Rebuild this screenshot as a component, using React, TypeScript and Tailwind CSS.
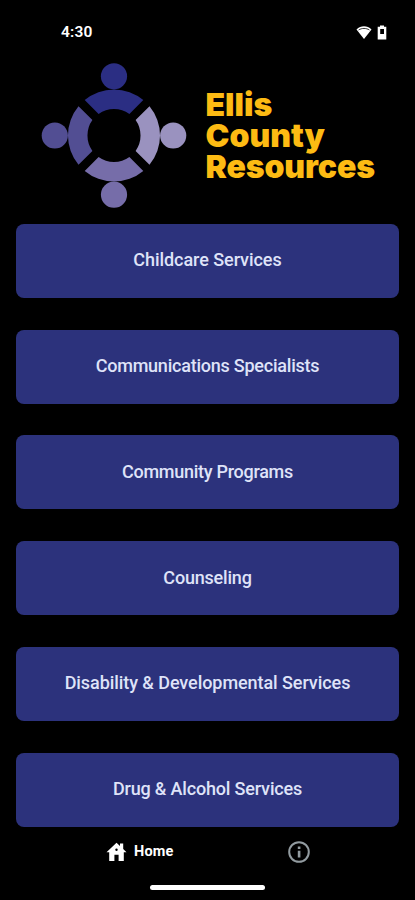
import React from "react";

const CATEGORIES = [
	{ label: "Childcare Services", tracking: "tracking-[-0.06px]" },
	{ label: "Communications Specialists", tracking: "tracking-[-0.23px]" },
	{ label: "Community Programs", tracking: "tracking-[-0.28px]" },
	{ label: "Counseling", tracking: "tracking-[-0.2px]" },
	{ label: "Disability & Developmental Services", tracking: "tracking-[-0.07px]" },
	{ label: "Drug & Alcohol Services", tracking: "tracking-[-0.17px]" },
];

const LOGO_PEOPLE = [
	{ color: "#2b2e83", angle: 0 },
	{ color: "#9a92bf", angle: 90 },
	{ color: "#766da9", angle: 180 },
	{ color: "#524e93", angle: 270 },
];

function StatusBar() {
	return (
		<div className="flex h-[61.8px] shrink-0 items-start justify-between pl-[61px] pr-[28px] pt-[23px]">
			<span className="text-[15.5px] leading-[19px] font-semibold tracking-[0.15px]">4:30</span>
			<div className="flex items-center gap-[5px] pt-[2px]">
				<svg width="16" height="15" viewBox="0 0 16 15">
					<path d="M0.5 4.4C4.8 0.3 11.2 0.3 15.5 4.4L8 14Z" fill="#fff" />
					<path d="M2.6 5C5.8 2.9 10.2 2.9 13.4 5" fill="none" stroke="#000" strokeWidth="0.8" />
				</svg>
				<svg width="10" height="15" viewBox="0 0 10 15">
					<path d="M3 0.5h4v1.3h2.3v12.7H0.7V1.8H3Z" fill="#fff" />
					<path d="M3.2 4h3.8v5H3.2Z" fill="#000" />
				</svg>
			</div>
		</div>
	);
}

function Logo() {
	return (
		<svg width="146" height="147" viewBox="-73 -73.5 146 147">
			{LOGO_PEOPLE.map((p) => (
				<g key={p.angle} fill={p.color} transform={`rotate(${p.angle})`}>
					<circle cx="0" cy="-59.2" r="13.1" />
					<path d="M-29.3 -35.5A46 46 0 0 1 29.3 -35.5L15.4 -21.6A26.5 26.5 0 0 0 -15.4 -21.6Z" />
				</g>
			))}
		</svg>
	);
}

export default function App() {
	return (
		<div className="flex h-[900px] w-[415px] flex-col overflow-hidden bg-black font-['Roboto',sans-serif] text-white">
			<StatusBar />

			<header className="flex h-[162px] shrink-0 items-start pl-[41px]">
				<Logo />
				<h1 className="flex flex-col pt-[27.4px] pl-[18.5px] font-['Inter',sans-serif] text-[32px] leading-[31px] font-black text-[#fdbb13]">
					<span>Ellis</span>
					<span>County</span>
					<span className="tracking-[-0.12px]">Resources</span>
				</h1>
			</header>

			<main className="flex shrink-0 flex-col gap-[31.8px] px-4">
				{CATEGORIES.map((c) => (
					<button
						key={c.label}
						className={`h-[74px] shrink-0 rounded-[8px] bg-[#2c327c] pb-[2px] text-[18px] font-medium whitespace-nowrap text-[#dfe3f8] ${c.tracking}`}
					>
						{c.label}
					</button>
				))}
			</main>

			<nav className="flex h-[50px] shrink-0 items-center">
				<div className="flex w-[280px] items-center gap-[7px] pl-[106px]">
					<svg width="21" height="20" viewBox="0 0 21 20">
						<path
							d="M10.5 0.8L14 4V1.5H17.2V7L20.5 10.3H17.8V19H12.6V12.8H8.4V19H3.2V10.3H0.5Z"
							fill="#fff"
						/>
						<circle cx="10.5" cy="7.7" r="1.2" fill="#000" />
					</svg>
					<span className="pt-px text-[14.5px] font-bold tracking-[0.2px]">Home</span>
				</div>
				<svg className="ml-[8px]" width="22" height="22" viewBox="0 0 22 22">
					<circle cx="11" cy="11" r="9.8" fill="none" stroke="#929ba0" strokeWidth="2" />
					<path d="M9.8 5.5h2.6v2.4H9.8ZM9.8 9.8h2.6v6.6H9.8Z" fill="#929ba0" />
				</svg>
			</nav>

			<div className="mx-auto mt-[8.5px] h-[4.5px] w-[115px] shrink-0 rounded-full bg-white" />
		</div>
	);
}
